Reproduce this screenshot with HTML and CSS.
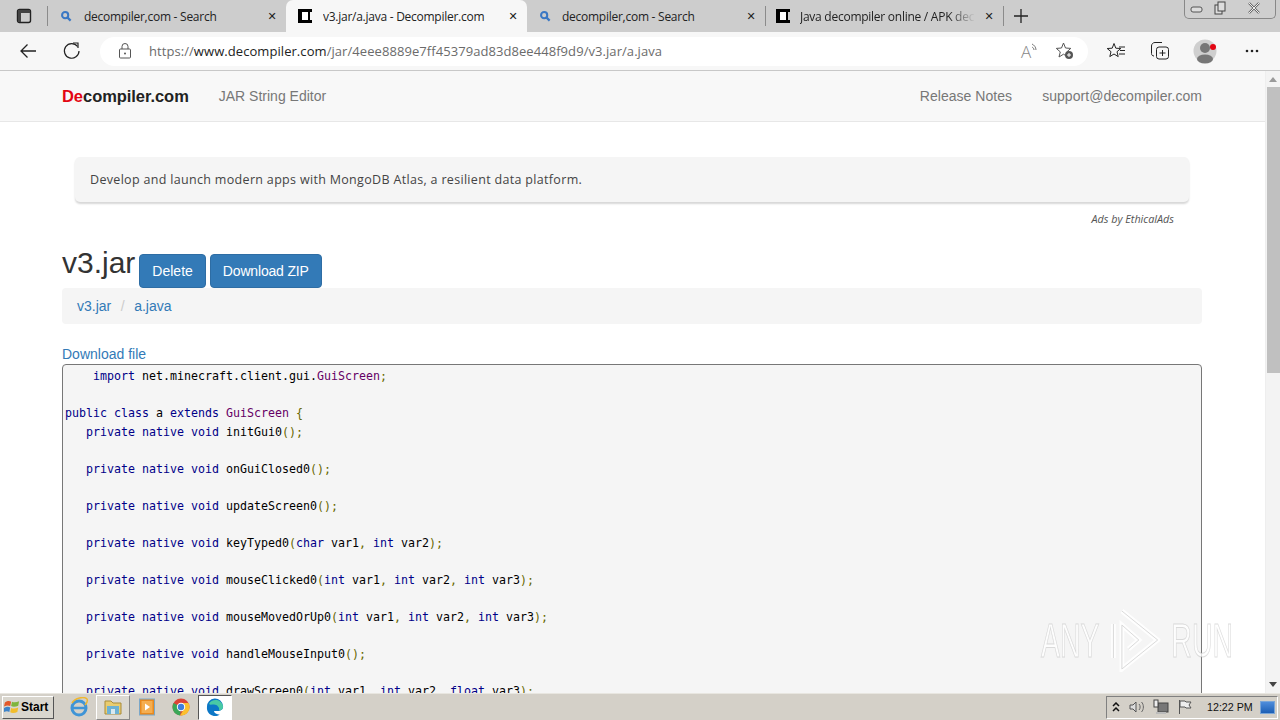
FILE: index.html
```html
<!DOCTYPE html>
<html lang="en">
<head>
<meta charset="utf-8">
<title>v3.jar/a.java - Decompiler.com</title>
<link rel="stylesheet" href="styles.css">
</head>
<body>
<div class="screen">
  <div class="tabstrip">
    <div class="strip-btn">
      <svg width="16" height="16" viewBox="0 0 16 16"><rect x="1.5" y="1.5" width="13" height="13" rx="2" fill="none" stroke="#222" stroke-width="1.4"/><path d="M2 2h12v3H2zM2 5h3v9H2z" fill="#444"/></svg>
    </div>
    <div class="tab tab-a">
      <svg class="fav" width="12" height="12" viewBox="0 0 14 14"><circle cx="6" cy="6" r="3.6" fill="none" stroke="#3b78c4" stroke-width="2.4"/><path d="M8.6 8.6l3.8 3.8" stroke="#3b78c4" stroke-width="2.6"/></svg>
      <span class="tab-title">decompiler,com - Search</span>
      <span class="tab-x">✕</span>
    </div>
    <div class="tab tab-active">
      <svg class="fav-d" width="14" height="14" viewBox="0 0 14 14"><path d="M0 0h14v3h-2v8h2v3H0z" fill="#000"/><rect x="4" y="3" width="6" height="8" fill="#fff"/></svg>
      <span class="tab-title">v3.jar/a.java - Decompiler.com</span>
      <span class="tab-x">✕</span>
    </div>
    <div class="tab tab-c">
      <svg class="fav" width="12" height="12" viewBox="0 0 14 14"><circle cx="6" cy="6" r="3.6" fill="none" stroke="#3b78c4" stroke-width="2.4"/><path d="M8.6 8.6l3.8 3.8" stroke="#3b78c4" stroke-width="2.6"/></svg>
      <span class="tab-title">decompiler,com - Search</span>
      <span class="tab-x">✕</span>
    </div>
    <div class="tab tab-d">
      <svg class="fav-d" width="14" height="14" viewBox="0 0 14 14"><path d="M0 0h14v3h-2v8h2v3H0z" fill="#000"/><rect x="4" y="3" width="6" height="8" fill="#fff"/></svg>
      <span class="tab-title fade">Java decompiler online / APK dec</span>
      <span class="tab-x">✕</span>
    </div>
    <div class="new-tab">
      <svg width="16" height="16" viewBox="0 0 16 16"><path d="M8 1v14M1 8h14" stroke="#222" stroke-width="1.3"/></svg>
    </div>
    <div class="win-controls">
      <svg width="92" height="19" viewBox="0 0 92 19"><rect x="7" y="8" width="11" height="5" rx="2" fill="#ddd" stroke="#555"/><rect x="31" y="6" width="7" height="9" fill="#ddd" stroke="#444"/><rect x="34" y="3" width="7" height="9" fill="#ddd" stroke="#444"/><path d="M65 4l10 10M75 4L65 14" stroke="#666" stroke-width="2.4"/><path d="M65 4l10 10M75 4L65 14" stroke="#eee" stroke-width="1"/></svg>
    </div>
  </div>
  <div class="toolbar">
    <svg class="tb-back" width="20" height="20" viewBox="0 0 20 20"><path d="M18 10H3M9.500 3.500L3 10l6.500 6.500" fill="none" stroke="#222" stroke-width="1.300"/></svg>
    <svg class="tb-reload" width="20" height="20" viewBox="0 0 20 20"><path d="M15.500 5.500A7.300 7.300 0 1 0 17 10" fill="none" stroke="#222" stroke-width="1.200"/><path d="M11 2h5v5" fill="none" stroke="#222" stroke-width="1.200"/></svg>
    <div class="address">
      <svg class="lock" width="14" height="16" viewBox="0 0 14 16"><rect x="1.500" y="6" width="11" height="9" rx="1" fill="none" stroke="#555"/><path d="M4 6V3.500a3 3 0 0 1 6 0V6" fill="none" stroke="#555"/><circle cx="7" cy="10.500" r="1" fill="#555"/></svg>
      <span class="url">https://<b class="url-host">www.decompiler.com</b>/jar/4eee8889e7ff45379ad83d8ee448f9d9/v3.jar/a.java</span>
      <span class="read">A<svg width="7" height="10" viewBox="0 0 7 10"><path d="M1 1c2 1 4 3 4 6M1 4c1 .5 2 1.500 2 3" fill="none" stroke="#777"/></svg></span>
      <svg class="addr-star" width="20" height="20" viewBox="0 0 20 20"><path d="M8.500 2l2 5 5.300.4-4 3.500 1.200 5.100-4.500-2.800L4 16l1.300-5.100-4-3.500L6.500 7z" fill="none" stroke="#555"/><circle cx="14" cy="14" r="4" fill="#555"/><path d="M14 12v4M12 14h4" stroke="#fff"/></svg>
    </div>
    <svg class="tb-fav" width="20" height="20" viewBox="0 0 20 20"><path d="M8 2.500l1.800 4.700 5 .3-3.800 3.200 1.200 4.900L8 13l-4.200 2.600L5 10.700 1.200 7.500l5-.3z" fill="none" stroke="#222" stroke-width="1"/><path d="M13 6h6M14 9.500h5M13 13h6" stroke="#222"/></svg>
    <svg class="tb-coll" width="20" height="20" viewBox="0 0 20 20"><rect x="6.500" y="6" width="12" height="12" rx="2.500" fill="none" stroke="#222"/><path d="M12.500 9v6M9.500 12h6" stroke="#222"/><path d="M4 15c-1.500 0-2.500-1-2.500-2.500V5C1.500 3 3 1.500 5 1.500h7" fill="none" stroke="#222"/></svg>
    <svg class="tb-prof" width="26" height="26" viewBox="0 0 26 26"><circle cx="12" cy="13" r="11.500" fill="#cfcfcf"/><circle cx="12" cy="10" r="5" fill="#777"/><ellipse cx="12" cy="21" rx="8" ry="4.500" fill="#777"/><circle cx="20" cy="9" r="3" fill="#e30613"/></svg>
    <svg class="tb-more" width="14" height="4" viewBox="0 0 14 4"><circle cx="2" cy="2" r="1.300" fill="#222"/><circle cx="7" cy="2" r="1.300" fill="#222"/><circle cx="12" cy="2" r="1.300" fill="#222"/></svg>
  </div>
  <div class="viewport">
    <div class="page">
      <nav class="navbar">
        <div class="nav-left">
          <span class="brand"><span class="brand-red">De</span>compiler.com</span>
          <span class="nav-link">JAR String Editor</span>
        </div>
        <div class="nav-right">
          <span class="nav-link">Release Notes</span>
          <span class="nav-link">support@decompiler.com</span>
        </div>
      </nav>
      <main class="content">
        <div class="ad">Develop and launch modern apps with MongoDB Atlas, a resilient data platform.</div>
        <div class="ad-by">Ads by EthicalAds</div>
        <div class="title-row">
          <h1 class="title">v3.jar</h1>
          <a class="btn btn-delete">Delete</a>
          <a class="btn btn-zip">Download ZIP</a>
        </div>
        <div class="crumbs"><a class="link">v3.jar</a><span class="sep">/</span><a class="link">a.java</a></div>
        <a class="link dl">Download file</a>
<pre class="code">    <i class="k">import</i> net.minecraft.client.gui.<i class="t">GuiScreen</i><i class="p">;</i>

<i class="k">public class</i> a <i class="k">extends</i> <i class="t">GuiScreen</i> <i class="p">{</i>
   <i class="k">private native void</i> initGui0<i class="p">();</i>

   <i class="k">private native void</i> onGuiClosed0<i class="p">();</i>

   <i class="k">private native void</i> updateScreen0<i class="p">();</i>

   <i class="k">private native void</i> keyTyped0<i class="p">(</i><i class="k">char</i> var1<i class="p">,</i> <i class="k">int</i> var2<i class="p">);</i>

   <i class="k">private native void</i> mouseClicked0<i class="p">(</i><i class="k">int</i> var1<i class="p">,</i> <i class="k">int</i> var2<i class="p">,</i> <i class="k">int</i> var3<i class="p">);</i>

   <i class="k">private native void</i> mouseMovedOrUp0<i class="p">(</i><i class="k">int</i> var1<i class="p">,</i> <i class="k">int</i> var2<i class="p">,</i> <i class="k">int</i> var3<i class="p">);</i>

   <i class="k">private native void</i> handleMouseInput0<i class="p">();</i>

   <i class="k">private native void</i> drawScreen0<i class="p">(</i><i class="k">int</i> var1<i class="p">,</i> <i class="k">int</i> var2<i class="p">,</i> <i class="k">float</i> var3<i class="p">);</i></pre>
      </main>
      <div class="watermark">
        <span>ANY</span>
        <svg width="86" height="64" viewBox="0 0 53 64" preserveAspectRatio="none"><path d="M3 16v34M12 3l38 29-38 29V17l18 15-11 9" fill="none" stroke="#fff" stroke-width="5"/><path d="M3 16v34M12 3l38 29-38 29V17l18 15-11 9" fill="none" stroke="#d4d4d4" stroke-width="1"/></svg>
        <span>RUN</span>
      </div>
    </div>
    <div class="scrollbar">
      <div class="sb-up"></div>
      <div class="sb-thumb"></div>
      <div class="sb-down"></div>
    </div>
  </div>
  <div class="taskbar">
    <div class="start">
      <svg width="16" height="16" viewBox="0 0 18 18"><path d="M1 4c3-2 5-2 7-1L7 8C5 7 3 7 0 8.500z" fill="#e2582a"/><path d="M9 3c2 1 5 1 8-.5L16 7.500c-3 1.500-6 1.500-8 .5z" fill="#7fb53c"/><path d="M0 10c3-1.500 5-1.500 7-.5l-1 5c-2-1-4-1-7 .5z" fill="#3d83c9"/><path d="M8 10c2 1 5 1 8-.5l-1 5c-3 1.500-6 1.500-8 .5z" fill="#f2bd2b"/></svg>
      <span>Start</span>
    </div>
    <div class="quick">
      <div class="q">
        <svg width="20" height="20" viewBox="0 0 20 20"><circle cx="10" cy="11" r="7" fill="none" stroke="#3f94d6" stroke-width="3"/><path d="M3 11h14" stroke="#3f94d6" stroke-width="2.500"/><path d="M3 6C6 1 15-1 18 2c1 2-1 5-2 6" fill="none" stroke="#efb72f" stroke-width="1.500"/></svg>
      </div>
      <div class="q q-raised">
        <svg width="18" height="18" viewBox="0 0 18 18"><path d="M1 3h6l2 2h8v11H1z" fill="#e9cc6f" stroke="#a88b3b"/><rect x="3" y="8" width="12" height="8" fill="#6db1d3"/><rect x="7" y="11" width="4" height="5" fill="#d9e8ef"/></svg>
      </div>
      <div class="q">
        <svg width="16" height="18" viewBox="0 0 16 18"><rect x="0.500" y="1" width="15" height="16" fill="#e98a1e" stroke="#7aa7c9"/><rect x="2.500" y="3" width="11" height="12" fill="#f5ae50"/><path d="M6 5.500l5 3.500-5 3.500z" fill="#fff"/></svg>
      </div>
      <div class="q">
        <svg width="18" height="18" viewBox="0 0 18 18"><circle cx="9" cy="9" r="8.500" fill="#dc4437"/><path d="M9 9L1.500 5A8.500 8.500 0 0 0 8 17.500z" fill="#3aa757"/><path d="M9 5h7.500a8.500 8.500 0 0 1-8.500 12.500L12 11z" fill="#fbc02d"/><circle cx="9" cy="9" r="4.200" fill="#fff"/><circle cx="9" cy="9" r="3.200" fill="#3f7fdc"/></svg>
      </div>
      <div class="q q-active">
        <svg width="18" height="18" viewBox="0 0 18 18"><path d="M1 9a8 8 0 0 1 16-1c.500 3-2 5-5 5H8c0 2 3 4 6 3.200A8 8 0 0 1 1 9z" fill="#0c77c6"/><path d="M3 6c2-5 12-6 14 2 .5 3-2 4.500-4 4.500 1-3-2-6-5-6S4 7 3 6z" fill="#48c9a5"/></svg>
      </div>
    </div>
    <div class="tray">
      <span class="tray-up">
        <svg width="8" height="10" viewBox="0 0 8 10"><path d="M1 4l3-3 3 3M1 9l3-3 3 3" fill="none" stroke="#111" stroke-width="1.500"/></svg>
      </span>
      <svg width="16" height="16" viewBox="0 0 16 16"><path d="M1 6h3l3-3v10l-3-3H1z" fill="#ddd" stroke="#555"/><path d="M10 5c1.500 1.500 1.500 4.500 0 6M12.500 3c2.500 2.500 2.500 7.500 0 10" fill="none" stroke="#666"/></svg>
      <svg width="16" height="16" viewBox="0 0 16 16"><rect x="5" y="4" width="10" height="9" fill="#777" stroke="#444"/><rect x="1" y="1" width="4" height="7" fill="#eee" stroke="#444"/><path d="M3 13h10v2H3z" fill="#bbb"/></svg>
      <svg width="16" height="16" viewBox="0 0 16 16"><path d="M2.500 1v14" stroke="#555"/><path d="M3 2h5l1 1h5l-2 3 2 3H9L8 8H3z" fill="#eee" stroke="#555"/></svg>
      <span class="clock">12:22 PM</span>
      <span class="show-desktop"></span>
    </div>
  </div>
</div>
</body>
</html>
```

FILE: styles.css
```css
* { box-sizing: border-box; }
html, body { margin: 0; padding: 0; }
body { width: 1280px; height: 720px; overflow: hidden; font-family: "Liberation Sans", Arial, sans-serif; }
.screen { width: 1280px; height: 720px; display: flex; flex-direction: column; overflow: hidden; background: #fff; }

/* tab strip */
.tabstrip { height: 32px; flex: none; display: flex; align-items: stretch; background: #cdcdcd; position: relative; }
.strip-btn { width: 47px; display: flex; align-items: center; justify-content: center; }
.tab { display: flex; align-items: center; font-family: "Open Sans", sans-serif; font-size: 12px; color: #222; position: relative; }
.tab::before { content: ""; position: absolute; left: 0; top: 6px; bottom: 6px; width: 1px; background: #8b8b8b; }
.tab-a { width: 239px; padding-left: 13px; }
.tab-active { width: 241px; padding-left: 12px; background: #f7f7f7; border-radius: 7px 7px 0 0; }
.tab-active::before { display: none; }
.tab-c { width: 238px; padding-left: 12px; }
.tab-c::before { display: none; }
.tab-d { width: 238px; padding-left: 11px; }
.fav, .fav-d { flex: none; }
.tab-a .fav { margin-right: 12px; }
.tab-c .fav { margin-right: 11px; }
.tab-active .fav-d { margin-right: 11px; }
.tab-d .fav-d { margin-right: 10px; }
.tab-title { flex: 1; white-space: nowrap; overflow: hidden; letter-spacing: -0.26px; }
.fade { -webkit-mask-image: linear-gradient(90deg, #000 85%, transparent 100%); mask-image: linear-gradient(90deg, #000 85%, transparent 100%); }
.tab-x { flex: none; width: 28px; text-align: center; font-size: 11px; font-family: "DejaVu Sans", sans-serif; color: #222; font-weight: bold; }
.new-tab { width: 36px; display: flex; align-items: center; justify-content: center; position: relative; }
.new-tab::before { content: ""; position: absolute; left: 0; top: 6px; bottom: 6px; width: 1px; background: #8b8b8b; }
.win-controls { position: absolute; right: 4px; top: 0; width: 92px; height: 19px; border: 1px solid #888; border-top: 0; border-radius: 0 0 5px 5px; background: #cfcfcf; }
.win-controls svg { display: block; margin: -1px; }

/* toolbar */
.toolbar { height: 39px; flex: none; display: flex; align-items: center; background: #f7f7f7; border-bottom: 1px solid #c8c8c8; padding: 0 0 0 18px; }
.tb-back { flex: none; margin-right: 24px; }
.tb-reload { flex: none; margin-right: 18px; }
.address { width: 988px; height: 29px; border-radius: 15px; background: #fff; display: flex; align-items: center; padding-left: 18px; margin-right: 18px; flex: none; }
.lock { flex: none; margin-right: 17px; }
.url { flex: 1; font-family: "Open Sans", sans-serif; font-size: 13px; letter-spacing: 0.065px; color: #6b6b6b; white-space: nowrap; }
.url-host { font-weight: 400; color: #222; }
.read { font-family: "Open Sans", sans-serif; font-size: 17px; font-weight: 300; color: #888; width: 26px; padding-left: 2px; display: flex; margin-right: 10px; }
.read svg { margin-top: 3px; }
.addr-star { flex: none; margin-right: 13px; }
.tb-fav { flex: none; margin-right: 24px; }
.tb-coll { flex: none; margin-right: 23px; }
.tb-prof { flex: none; margin-right: 26px; }
.tb-more { flex: none; }

/* page */
.viewport { flex: 1; min-height: 0; display: flex; }
.page { flex: 1; min-width: 0; position: relative; overflow: hidden; background: #fff; }
.navbar { height: 51px; background: #f8f8f8; border-bottom: 1px solid #e7e7e7; display: flex; justify-content: space-between; align-items: center; padding: 0 63px 0 62px; }
.nav-left, .nav-right { display: flex; align-items: center; gap: 30px; }
.nav-right { letter-spacing: 0.04px; }
.brand { font-size: 16.5px; font-weight: 700; color: #222; letter-spacing: -0.05px; }
.brand-red { color: #e30613; }
.nav-link { font-size: 14px; color: #777; }
.content { padding: 35px 63px 0 62px; }
.ad { margin: 0 13px; height: 45px; background: #f5f5f5; border-radius: 5px; box-shadow: 0 2px 2px rgba(0,0,0,.16); padding: 0 15px; display: flex; align-items: center; font-family: "Open Sans", sans-serif; font-size: 12.5px; color: #444; letter-spacing: 0.32px; }
.ad-by { margin-top: 10px; padding-right: 28px; text-align: right; font-family: "Open Sans", sans-serif; font-style: italic; font-size: 10.8px; line-height: 14px; color: #555; }
.title-row { display: flex; align-items: flex-start; margin-top: 28px; height: 36px; }
.title { margin: -11px 4px 0 0; font-size: 30px; font-weight: 500; line-height: 40px; color: #333; }
.btn { display: block; height: 34px; line-height: 32px; padding: 0 12px; background: #337ab7; border: 1px solid #2e6da4; border-radius: 4px; color: #fff; font-size: 14px; }
.btn-zip { margin-left: 4px; letter-spacing: -0.17px; }
.crumbs { height: 36px; margin-top: -2px; background: #f5f5f5; border-radius: 4px; padding: 0 15px; display: flex; align-items: center; font-size: 14px; }
.link { color: #337ab7; }
.sep { color: #ccc; margin: 0 9.500px; }
.dl { display: block; font-size: 14px; line-height: 20px; margin-top: 20px; }
.code { margin: 0; height: 400px; overflow: hidden; background: #f5f5f5; border: 1px solid #777; border-radius: 4px; padding: 2px; font-family: "DejaVu Sans Mono", monospace; font-size: 11.63px; line-height: 18.5px; color: #000; }
.code i { font-style: normal; }
.k { color: #000088; }
.t { color: #660066; }
.p { color: #666600; }
.watermark { position: absolute; left: 1041px; top: 537px; display: flex; align-items: center; gap: 19px; font-family: "Liberation Sans", sans-serif; font-size: 49px; white-space: nowrap; color: rgba(255,255,255,.75); -webkit-text-stroke: 1px rgba(170,170,170,.4); transform: scaleX(.58); transform-origin: left center; }
.watermark svg { opacity: .85; flex: none; }

/* scrollbar */
.scrollbar { width: 15px; flex: none; background: #f3f3f3; border-left: 1px solid #eee; display: flex; flex-direction: column; align-items: center; }
.sb-up { flex: none; margin-top: 6px; border: 4px solid transparent; border-top: 0; border-bottom: 5px solid #9a9a9a; }
.sb-thumb { flex: none; width: 13px; height: 286px; margin-top: 5px; background: #c0c0c0; }
.sb-down { margin-top: auto; margin-bottom: 6px; border: 4px solid transparent; border-bottom: 0; border-top: 5px solid #444; }

/* taskbar */
.taskbar { height: 27px; flex: none; display: flex; align-items: center; background: #d4d0c8; border-top: 1px solid #e8e6e0; padding-left: 2px; }
.start { width: 52px; height: 23px; display: flex; align-items: center; gap: 1px; padding-left: 1px; background: #d9d6ce; border: 1px solid; border-color: #fff #555 #555 #fff; font-weight: 700; font-size: 12px; color: #000; }
.quick { display: flex; align-items: center; margin-left: 8px; height: 25px; }
.q { width: 34px; height: 25px; display: flex; align-items: center; justify-content: center; }
.q-raised { border: 1px solid; border-color: #fff #888 #888 #fff; background: #dcd9d2; }
.q-active { background: #fff; border: 1px solid; border-color: #555 #fff #fff #555; }
.tray { margin-left: auto; margin-right: 2px; width: 172px; height: 23px; border: 1px solid; border-color: #808080 #fff #fff #808080; display: flex; align-items: center; padding-left: 5px; }
.tray-up { width: 12px; display: flex; margin-right: 5px; }
.tray svg { flex: none; }
.tray > svg { margin-right: 8px; }
.clock { font-size: 10.7px; color: #111; white-space: nowrap; margin-left: 6px; }
.show-desktop { width: 15px; height: 13px; margin-left: auto; margin-right: 2px; background: linear-gradient(#4f8ddb, #1d5fb5); border: 1px solid #7aa6d8; }
```
